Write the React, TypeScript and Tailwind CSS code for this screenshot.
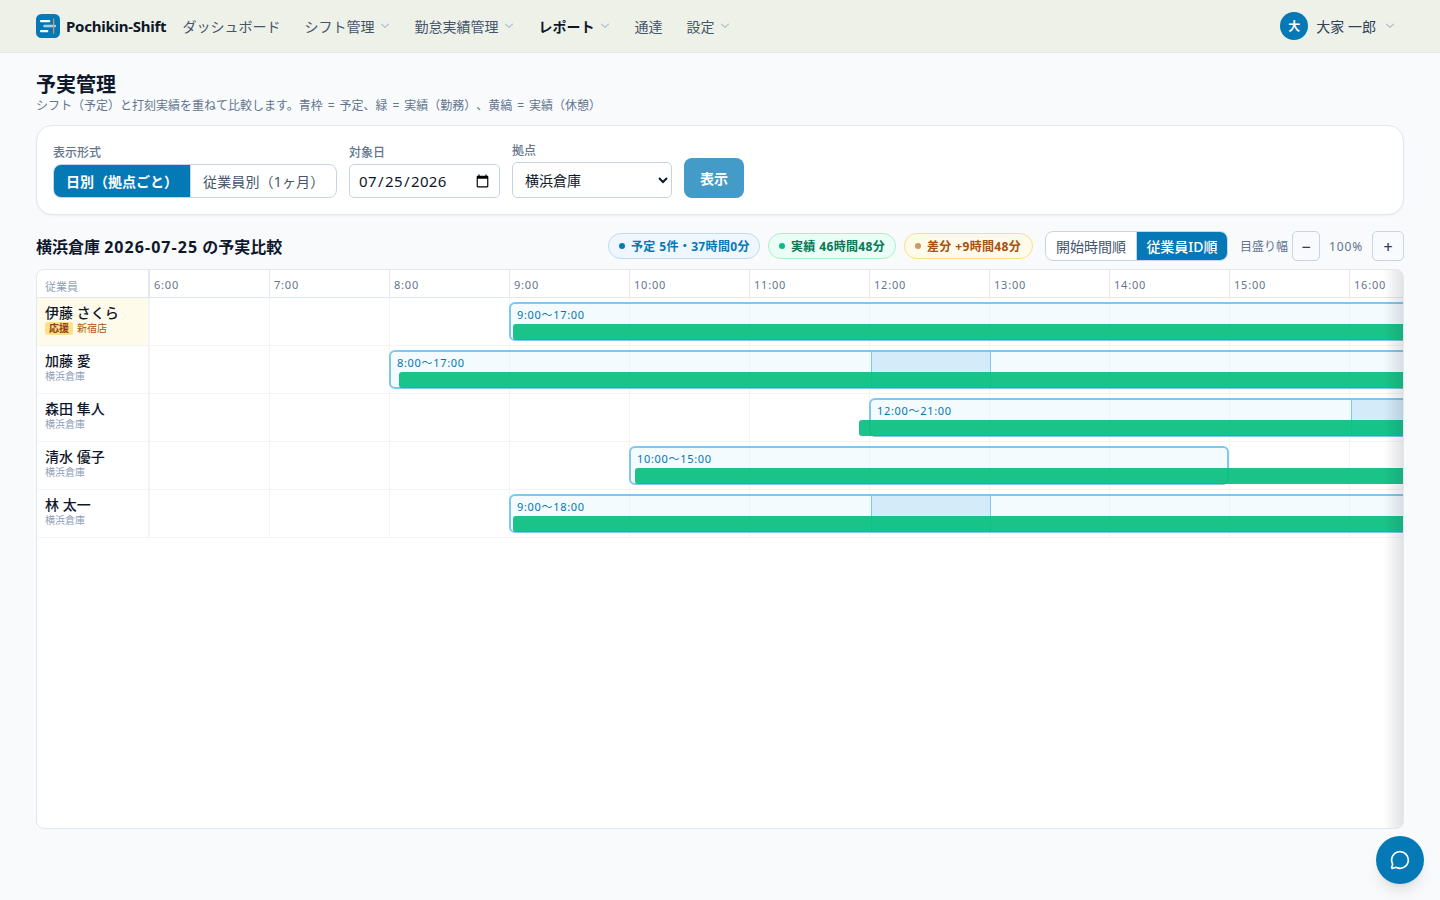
import React from 'react';
import { MessageCircle } from 'lucide-react';

const HOURS = [6, 7, 8, 9, 10, 11, 12, 13, 14, 15, 16];
const HOUR_WIDTH = 120;

type Row = {
  name: string;
  site: string;
  support?: boolean;
  start: number;
  end: number;
  label: string;
  breakStart?: number;
  actual: number;
};

const ROWS: Row[] = [
  { name: '伊藤 さくら', site: '新宿店', support: true, start: 9, end: 17, label: '9:00〜17:00', actual: 364 },
  { name: '加藤 愛', site: '横浜倉庫', start: 8, end: 17, label: '8:00〜17:00', breakStart: 12, actual: 250 },
  { name: '森田 隼人', site: '横浜倉庫', start: 12, end: 21, label: '12:00〜21:00', breakStart: 16, actual: 710 },
  { name: '清水 優子', site: '横浜倉庫', start: 10, end: 15, label: '10:00〜15:00', actual: 486 },
  { name: '林 太一', site: '横浜倉庫', start: 9, end: 18, label: '9:00〜18:00', breakStart: 12, actual: 364 },
];

function Logo() {
  return (
    <svg width="24" height="24" viewBox="0 0 24 24" className="shrink-0">
      <rect width="24" height="24" rx="5.5" fill="#0479b6" />
      <rect x="4" y="6" width="10.3" height="2.2" rx="1" fill="#fff" />
      <rect x="7.3" y="10.8" width="12.7" height="2.4" rx="1" fill="#a9d2e8" />
      <rect x="4" y="16" width="8.3" height="2.2" rx="1" fill="#fff" />
      <rect x="17" y="4.6" width="1.2" height="15" fill="#dd9464" />
    </svg>
  );
}

function Chevron() {
  return (
    <svg width="12" height="12" viewBox="0 0 12 12" fill="none" stroke="currentColor" className="shrink-0 text-[#b3c0ce]">
      <path d="M2.6 4.2 6 7.4l3.4-3.2" strokeWidth="1.2" strokeLinecap="round" strokeLinejoin="round" />
    </svg>
  );
}

function NavItem({ label, menu, active }: { label: string; menu?: boolean; active?: boolean }) {
  return (
    <div className={active ? 'flex items-center gap-1 font-semibold text-slate-900' : 'flex items-center gap-1 text-slate-600'}>
      <span className="translate-y-px">{label}</span>
      {menu && <Chevron />}
    </div>
  );
}

function Pill({ tone, dot, children }: { tone: string; dot: string; children: React.ReactNode }) {
  return (
    <div className={`flex h-[26px] items-center gap-1.5 rounded-full border pl-2.5 text-xs font-bold whitespace-nowrap ${tone}`}>
      <span className={`size-1.5 rounded-full ${dot}`} />
      <span className="translate-y-px tracking-[0.36px]">{children}</span>
    </div>
  );
}

function TimelineRow({ row }: { row: Row }) {
  return (
    <div className="flex h-12 w-[1432px] border-b border-slate-100">
      <div className={`w-28 shrink-0 border-r border-slate-100 pt-1 pl-2 ${row.support ? 'bg-[#fffbeb]' : 'bg-white'}`}>
        <div className="h-[19px] text-sm leading-[22px] font-medium text-slate-900">{row.name}</div>
        {row.support ? (
          <div className="flex h-3.5 items-center gap-1 text-[10px] leading-[13px] text-[#b45309]">
            <span className="rounded-[3px] bg-[#fde08a] px-1 font-bold text-[#92400e]">応援</span>
            <span>{row.site}</span>
          </div>
        ) : (
          <div className="text-[10px] leading-[14px] text-slate-400">{row.site}</div>
        )}
      </div>
      <div className="relative flex">
        {HOURS.map((h) => (
          <div key={h} className="w-30 shrink-0 border-l border-slate-100" />
        ))}
        <div
          className="absolute top-1 bottom-1 rounded-[6px] border-2 border-[#7fc8ea] bg-[#e0f4fd]/40"
          style={{ left: (row.start - 6) * HOUR_WIDTH, width: (row.end - row.start) * HOUR_WIDTH }}
        >
          {row.breakStart !== undefined && (
            <div
              className="absolute inset-y-0 w-30 border-x border-[#7fc8ea] bg-[#d4ebf9]"
              style={{ left: (row.breakStart - row.start) * HOUR_WIDTH }}
            />
          )}
          <div className="pl-1.5 text-[11px] leading-[21px] tracking-[0.68px] whitespace-nowrap text-[#0477b3]">{row.label}</div>
        </div>
        <div
          className="absolute top-[26px] h-4 rounded-[3px] bg-[#09bf80]/93"
          style={{ left: row.actual, width: 1420 - row.actual }}
        />
      </div>
    </div>
  );
}

export default function App() {
  return (
    <div className="h-[900px] overflow-hidden bg-[#f8fafc] font-['Noto_Sans','Noto_Sans_CJK_JP',sans-serif] text-slate-900 [text-spacing-trim:space-all]">
      <header className="flex h-[53px] items-center border-b border-slate-200 bg-[#eef1e7] px-9 text-sm">
        <Logo />
        <span className="ml-1.5 w-[100.6px] translate-y-px text-[15px] font-bold tracking-[-0.25px] whitespace-nowrap">Pochikin-Shift</span>
        <nav className="ml-4 flex items-center gap-6">
          <NavItem label="ダッシュボード" />
          <NavItem label="シフト管理" menu />
          <NavItem label="勤怠実績管理" menu />
          <NavItem label="レポート" menu active />
          <NavItem label="通達" />
          <NavItem label="設定" menu />
        </nav>
        <div className="mr-2 ml-auto flex items-center gap-2 text-slate-700">
          <span className="flex size-7 items-center justify-center rounded-full bg-[#0479b6] pt-px text-xs font-bold text-white">大</span>
          <span className="translate-y-px">大家 一郎</span>
          <Chevron />
        </div>
      </header>

      <main className="px-9 pt-[17px]">
        <h1 className="translate-y-px text-xl leading-7 font-bold">予実管理</h1>
        <p className="text-xs leading-4 text-slate-500 [word-spacing:1.8px]">シフト（予定）と打刻実績を重ねて比較します。青枠 = 予定、緑 = 実績（勤務）、黄縞 = 実績（休憩）</p>

        <section className="mt-[11px] flex h-[90px] items-end gap-3 rounded-2xl border border-slate-200 bg-white px-4 pb-4 shadow-xs">
          <div>
            <div className="mb-[3px] text-xs leading-4 font-medium text-slate-500">表示形式</div>
            <div className="flex h-[34px] w-[284px] overflow-hidden rounded-lg border border-[#c6d5e3] text-sm">
              <div className="flex w-[136px] items-center bg-[#0479b6] pt-px pl-3 font-semibold whitespace-nowrap text-white">日別（拠点ごと）</div>
              <div className="flex flex-1 items-center border-l border-[#c6d5e3] pt-px pl-3 tracking-[0.15px] whitespace-nowrap text-slate-600">従業員別（1ヶ月）</div>
            </div>
          </div>
          <label className="block">
            <div className="mb-[3px] text-xs leading-4 font-medium text-slate-500">対象日</div>
            <input
              type="date"
              defaultValue="2026-07-25"
              className="block h-[34px] w-[151px] rounded-[5px] border border-[#c6d5e3] bg-white pr-[7px] pl-2 text-[15px] tracking-[0.4px] text-slate-900"
            />
          </label>
          <label className="block">
            <div className="mb-[3px] text-xs leading-4 font-medium text-slate-500">拠点</div>
            <select className="block h-9 w-40 rounded-[5px] border border-[#c6d5e3] bg-white pl-2 text-sm text-slate-900">
              <option>横浜倉庫</option>
            </select>
          </label>
          <button className="h-10 w-15 rounded-lg bg-[#459bc8] pt-0.5 text-sm font-semibold text-white">表示</button>
        </section>

        <div className="mt-4 flex h-[30px] items-center">
          <h2 className="translate-y-px text-base font-bold whitespace-nowrap">
            横浜倉庫 <span className="tracking-[1.05px]">2026-07-25</span> の予実比較
          </h2>
          <div className="ml-auto flex items-center gap-2">
            <Pill tone="w-[152px] border-[#bcdcf0] bg-[#eff6fd] text-[#0479b6]" dot="bg-[#0479b6]">予定 5件・37時間0分</Pill>
            <Pill tone="w-[128px] border-[#a7f0d0] bg-[#ecfdf5] text-[#047857]" dot="bg-[#10b981]">実績 46時間48分</Pill>
            <Pill tone="w-[129px] border-[#fbdf80] bg-[#fffbeb] text-[#a8500f]" dot="bg-[#d6955e]">差分 +9時間48分</Pill>
          </div>
          <div className="ml-3 flex h-[30px] w-[183px] overflow-hidden rounded-lg border border-[#c6d5e3] bg-white text-sm">
            <div className="flex w-[90px] items-center justify-center pt-px text-slate-600">開始時間順</div>
            <div className="flex flex-1 items-center justify-center border-l border-[#c6d5e3] bg-[#0479b6] pt-px font-medium text-white">従業員ID順</div>
          </div>
          <span className="ml-3 translate-y-px text-xs text-slate-500">目盛り幅</span>
          <button className="ml-1 flex h-[30px] w-7 items-center justify-center rounded-[5px] border border-[#c6d5e3] pt-0.5 text-base font-medium text-slate-700">−</button>
          <span className="w-[52px] translate-y-px text-center text-xs tracking-[0.9px] text-slate-500">100%</span>
          <button className="flex h-[30px] w-8 items-center justify-center rounded-[5px] border border-[#c6d5e3] pt-0.5 text-base font-medium text-slate-700">+</button>
        </div>

        <section className="relative mt-2 h-[560px] overflow-hidden rounded-lg border border-slate-200 bg-white">
          <div className="flex h-7 w-[1432px] border-b border-slate-200">
            <div className="w-28 shrink-0 border-r border-slate-200 pt-[5px] pl-2 text-[11px] leading-[23px] text-slate-400">従業員</div>
            {HOURS.map((h) => (
              <div key={h} className="w-30 shrink-0 border-l border-slate-200 pt-1 pl-1 text-[11px] leading-[22px] tracking-[0.8px] text-slate-500">
                {h}:00
              </div>
            ))}
          </div>
          {ROWS.map((row) => (
            <TimelineRow key={row.name} row={row} />
          ))}
          <div className="absolute -inset-y-px -right-px w-5 bg-linear-to-l from-slate-900/13 to-transparent" />
        </section>
      </main>

      <button className="fixed right-4 bottom-4 flex size-12 items-center justify-center rounded-full bg-[#0479b6] text-white shadow-lg">
        <MessageCircle className="size-5" strokeWidth={2} />
      </button>
    </div>
  );
}
